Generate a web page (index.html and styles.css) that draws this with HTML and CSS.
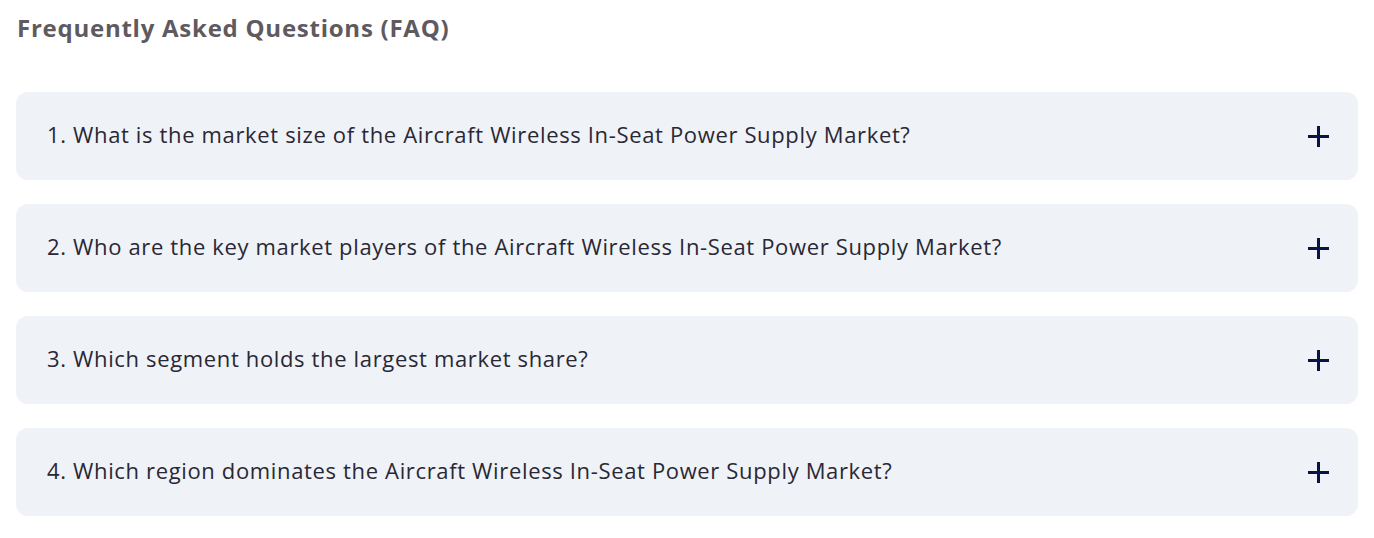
FILE: index.html
```html
<!DOCTYPE html>
<html lang="en">
<head>
    <meta charset="UTF-8">
    <meta name="viewport" content="width=device-width, initial-scale=1.0">
    <title>FAQ</title>
    <link rel="stylesheet" href="styles.css">
</head>
<body>
    <section class="faq">
        <h2 class="faq-title">Frequently Asked Questions (FAQ)</h2>

        <div class="faq-list">
            <div class="faq-item">
                <span class="faq-question">1. What is the market size of the Aircraft Wireless In-Seat Power Supply Market?</span>
                <span class="faq-toggle"></span>
            </div>
            <div class="faq-item">
                <span class="faq-question">2. Who are the key market players of the Aircraft Wireless In-Seat Power Supply Market?</span>
                <span class="faq-toggle"></span>
            </div>
            <div class="faq-item">
                <span class="faq-question">3. Which segment holds the largest market share?</span>
                <span class="faq-toggle"></span>
            </div>
            <div class="faq-item">
                <span class="faq-question">4. Which region dominates the Aircraft Wireless In-Seat Power Supply Market?</span>
                <span class="faq-toggle"></span>
            </div>
        </div>
    </section>
</body>
</html>
```

FILE: styles.css
```css
body {
    margin: 0;
    padding: 0 16px;
    font-family: "Open Sans", Arial, sans-serif;
    background-color: #fff;
}
.faq-title {
    margin: 13px 0 0 1px;
    font-size: 24px;
    font-weight: 700;
    letter-spacing: 0.75px;
    color: #5e5a60;
    line-height: 30px;
}
.faq-list {
    display: flex;
    flex-direction: column;
    gap: 24px;
    margin-top: 49px;
}
.faq-item {
    display: flex;
    align-items: center;
    justify-content: space-between;
    height: 88px;
    padding: 0 29px 0 31px;
    background-color: #eff2f7;
    border-radius: 12px;
}
.faq-question {
    font-size: 22px;
    letter-spacing: 0.65px;
    line-height: 30px;
    margin-bottom: 4px;
    color: #292834;
}
.faq-toggle {
    position: relative;
    width: 21px;
    height: 21px;
}
.faq-toggle::before,
.faq-toggle::after {
    content: "";
    position: absolute;
    background-color: #0d1245;
}
.faq-toggle::before {
    left: 0;
    top: 9px;
    width: 21px;
    height: 3px;
}
.faq-toggle::after {
    left: 9px;
    top: 0;
    width: 3px;
    height: 21px;
}
```
